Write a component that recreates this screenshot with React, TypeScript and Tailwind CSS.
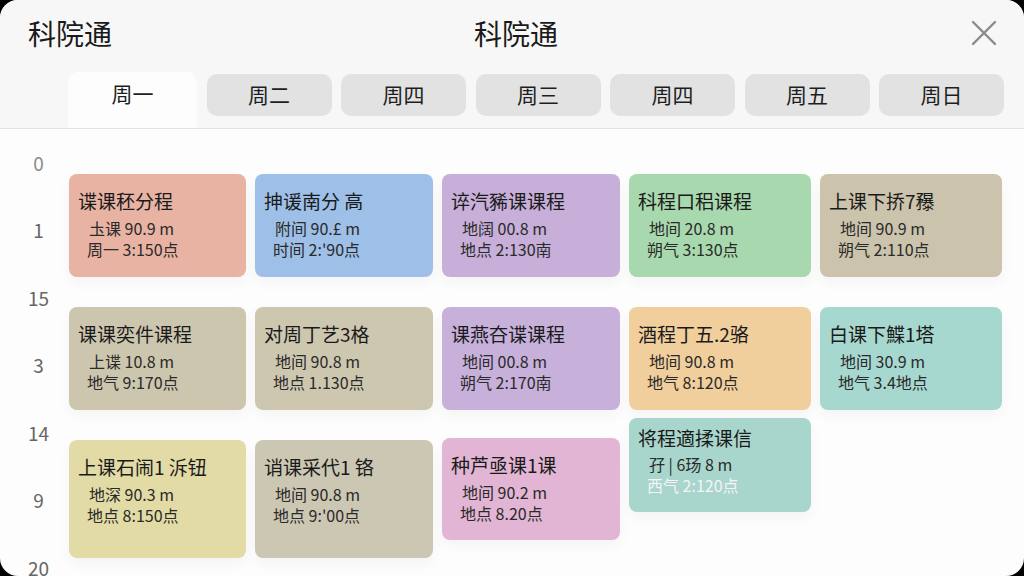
const tabs = ["周一", "周二", "周四", "周三", "周四", "周五", "周日"];

const hours = ["0", "1", "15", "3", "14", "9", "20"];

type Card = {
  title: string;
  lines: [string, string];
  bg: string;
  h: string;
  mt: string;
  pt?: string;
  faded?: boolean;
};

const columns: { w: string; cards: Card[] }[] = [
  {
    w: "w-[177px]",
    cards: [
      { title: "谍课秠分程", lines: ["圡课 90.9 m", "周一 3:150点"], bg: "bg-[#e8b3a3]", h: "h-[103px]", mt: "mt-[45px]" },
      { title: "课课奕件课程", lines: ["上谍 10.8 m", "地气 9:170点"], bg: "bg-[#cdc6ae]", h: "h-[103px]", mt: "mt-[30px]" },
      { title: "上课石闹1 泝钮", lines: ["地深 90.3 m", "地点 8:150点"], bg: "bg-[#e2dba6]", h: "h-[118px]", mt: "mt-[30px]" },
    ],
  },
  {
    w: "w-[178px]",
    cards: [
      { title: "抻谖南分 高", lines: ["附间 90.£ m", "时间 2:'90点"], bg: "bg-[#9dbfe8]", h: "h-[103px]", mt: "mt-[45px]" },
      { title: "对周丁艺3格", lines: ["地间 90.8 m", "地点 1.130点"], bg: "bg-[#cec7b0]", h: "h-[103px]", mt: "mt-[30px]" },
      { title: "诮课采代1 铬", lines: ["地间 90.8 m", "地点 9:'00点"], bg: "bg-[#ccc7b2]", h: "h-[118px]", mt: "mt-[30px]" },
    ],
  },
  {
    w: "w-[178px]",
    cards: [
      { title: "谇汽豨课课程", lines: ["地阔 00.8 m", "地点 2:130南"], bg: "bg-[#c7afd9]", h: "h-[103px]", mt: "mt-[45px]" },
      { title: "课燕夻谍课程", lines: ["地间 00.8 m", "朔气 2:170南"], bg: "bg-[#c7b0da]", h: "h-[103px]", mt: "mt-[30px]" },
      { title: "种芦亟课1课", lines: ["地间 90.2 m", "地点 8.20点"], bg: "bg-[#e1b5d3]", h: "h-[102px]", mt: "mt-[28px]" },
    ],
  },
  {
    w: "w-[182px]",
    cards: [
      { title: "科程口稆课程", lines: ["地间 20.8 m", "朔气 3:130点"], bg: "bg-[#a8d8ad]", h: "h-[103px]", mt: "mt-[45px]" },
      { title: "酒程丁五.2骆", lines: ["地间 90.8 m", "地气 8:120点"], bg: "bg-[#f1cf9c]", h: "h-[103px]", mt: "mt-[30px]" },
      { title: "将程適揉课信", lines: ["孖 | 6玚 8 m", "西气 2:120点"], bg: "bg-[#a9d6cc]", h: "h-[94px]", mt: "mt-[8px]", pt: "pt-[8px]", faded: true },
    ],
  },
  {
    w: "w-[182px]",
    cards: [
      { title: "上课下挢7䂍", lines: ["地间 90.9 m", "朔气 2:110点"], bg: "bg-[#cbc3ab]", h: "h-[103px]", mt: "mt-[45px]" },
      { title: "白课下鰈1塔", lines: ["地间 30.9 m", "地气 3.4地点"], bg: "bg-[#a7d8d0]", h: "h-[103px]", mt: "mt-[30px]" },
    ],
  },
];

function ScheduleCard({ card }: { card: Card }) {
  return (
    <div className={`${card.bg} ${card.h} ${card.mt} ${card.pt ?? "pt-[15px]"} rounded-[8px] pl-[9px] shadow-[0_6px_14px_rgba(0,0,0,0.04)]`}>
      <div className="text-[19px] leading-[24px] text-[#1a1a1a] whitespace-nowrap">{card.title}</div>
      <div className={`${card.pt ? "mt-[4px]" : "mt-[5px]"} pl-[9px] text-[16px] leading-[20.5px] text-[#2a2a2a] whitespace-nowrap`}>
        <div className="pl-[2px]">{card.lines[0]}</div>
        <div className={card.faded ? "text-[#f4f4f4]" : ""}>{card.lines[1]}</div>
      </div>
    </div>
  );
}

export default function App() {
  return (
    <div className="w-[1024px] h-[576px] bg-black overflow-hidden font-['Noto_Sans_CJK_SC','Noto_Sans',sans-serif]">
      <div className="h-full rounded-[18px] bg-[#fdfdfd] overflow-hidden flex flex-col">
        {/* Header */}
        <div className="bg-[#f7f7f7] border-b border-[#e2e2e2]">
          <div className="h-[72px] pb-[6px] px-[28px] grid grid-cols-[1fr_auto_1fr] items-center">
            <div className="text-[28px] leading-none text-[#1a1a1a]">科院通</div>
            <div className="text-[28px] leading-none text-[#1a1a1a] pl-[8px]">科院通</div>
            <div className="flex justify-end">
              <svg width="26" height="26" viewBox="0 0 26 26" className="mr-[-1px]">
                <path d="M2 2 L24 24 M24 2 L2 24" stroke="#8a8a8a" strokeWidth="2.4" strokeLinecap="round" />
              </svg>
            </div>
          </div>
          {/* Tabs */}
          <div className="flex items-start gap-[9.5px] pl-[68px] h-[56px]">
            {tabs.map((t, i) =>
              i === 0 ? (
                <div key={i} className="w-[129px] h-[56px] pb-[12px] rounded-t-[10px] bg-[#fdfdfd] flex items-center justify-center text-[21px] text-[#1e1e1e]">
                  {t}
                </div>
              ) : (
                <div key={i} className="w-[125px] h-[42px] mt-[2px] rounded-[10px] bg-[#e2e2e2] flex items-center justify-center text-[21px] text-[#1e1e1e]">
                  {t}
                </div>
              )
            )}
          </div>
        </div>

        {/* Body */}
        <div className="flex-1 flex">
          <div className="w-[69px] shrink-0 pl-[8px]">
            {hours.map((h, i) => (
              <div key={i} className={`h-[67.5px] flex items-center justify-center text-[19px] ${i === 0 ? "text-[#8a8a8a]" : "text-[#666]"}`}>
                {h}
              </div>
            ))}
          </div>
          <div className="flex gap-[9px]">
            {columns.map((col, ci) => (
              <div key={ci} className={`${col.w} flex flex-col`}>
                {col.cards.map((c, k) => (
                  <ScheduleCard key={k} card={c} />
                ))}
              </div>
            ))}
          </div>
        </div>
      </div>
    </div>
  );
}
